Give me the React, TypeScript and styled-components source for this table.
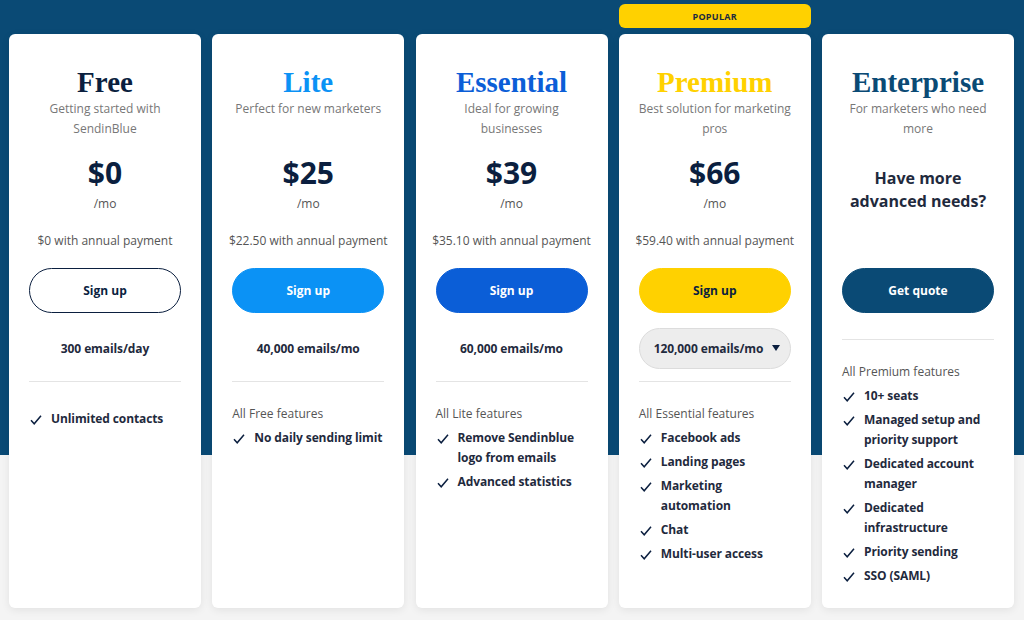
import React from "react";
import styled, { createGlobalStyle } from "styled-components";

const NAVY = "#0a4a75";
const INK = "#0b1f3f";
const TEXT = "#1f2a3d";

const GlobalStyle = createGlobalStyle`
  body {
    margin: 0;
    font-family: "Open Sans", "Liberation Sans", sans-serif;
    color: ${INK};
  }
`;

type Plan = {
  name: string;
  color: string;
  subtitle: string;
  price?: string;
  annual?: string;
  question?: string;
  button: string;
  buttonBg: string;
  buttonText: string;
  outline?: boolean;
  volume?: string;
  select?: boolean;
  label?: string;
  features: string[];
};

const plans: Plan[] = [
  {
    name: "Free",
    color: INK,
    subtitle: "Getting started with SendinBlue",
    price: "$0",
    annual: "$0 with annual payment",
    button: "Sign up",
    buttonBg: "#fff",
    buttonText: INK,
    outline: true,
    volume: "300 emails/day",
    features: ["Unlimited contacts"],
  },
  {
    name: "Lite",
    color: "#0b92f5",
    subtitle: "Perfect for new marketers",
    price: "$25",
    annual: "$22.50 with annual payment",
    button: "Sign up",
    buttonBg: "#0b92f5",
    buttonText: "#fff",
    volume: "40,000 emails/mo",
    label: "All Free features",
    features: ["No daily sending limit"],
  },
  {
    name: "Essential",
    color: "#0b5ed7",
    subtitle: "Ideal for growing businesses",
    price: "$39",
    annual: "$35.10 with annual payment",
    button: "Sign up",
    buttonBg: "#0b5ed7",
    buttonText: "#fff",
    volume: "60,000 emails/mo",
    label: "All Lite features",
    features: ["Remove Sendinblue logo from emails", "Advanced statistics"],
  },
  {
    name: "Premium",
    color: "#ffd100",
    subtitle: "Best solution for marketing pros",
    price: "$66",
    annual: "$59.40 with annual payment",
    button: "Sign up",
    buttonBg: "#ffd100",
    buttonText: INK,
    volume: "120,000 emails/mo",
    select: true,
    label: "All Essential features",
    features: [
      "Facebook ads",
      "Landing pages",
      "Marketing automation",
      "Chat",
      "Multi-user access",
    ],
  },
  {
    name: "Enterprise",
    color: NAVY,
    subtitle: "For marketers who need more",
    question: "Have more advanced needs?",
    button: "Get quote",
    buttonBg: NAVY,
    buttonText: "#fff",
    label: "All Premium features",
    features: [
      "10+ seats",
      "Managed setup and priority support",
      "Dedicated account manager",
      "Dedicated infrastructure",
      "Priority sending",
      "SSO (SAML)",
    ],
  },
];

const Check = () => (
  <CheckIcon viewBox="0 0 12 10" width="12" height="10">
    <polyline points="1,5.3 4.2,8.8 11,0.8" fill="none" stroke={INK} strokeWidth="1.5" />
  </CheckIcon>
);

const Caret = () => (
  <svg viewBox="0 0 8 6" width="8" height="6">
    <polygon points="0,0 8,0 4,6" fill={INK} />
  </svg>
);

const App = () => {
  return (
    <Page>
      <GlobalStyle />
      <Grid>
        <Badge>POPULAR</Badge>
        {plans.map((p) => (
          <Card key={p.name}>
            <Title $color={p.color}>{p.name}</Title>
            <Subtitle>{p.subtitle}</Subtitle>

            <PriceArea>
              {p.price ? (
                <>
                  <Price>{p.price}</Price>
                  <Per>/mo</Per>
                  <Annual>{p.annual}</Annual>
                </>
              ) : (
                <Question>{p.question}</Question>
              )}
            </PriceArea>

            <Button $bg={p.buttonBg} $text={p.buttonText} $outline={p.outline}>
              {p.button}
            </Button>

            <Volume $empty={!p.volume}>
              {p.select ? (
                <Select>
                  <span>{p.volume}</span>
                  <Caret />
                </Select>
              ) : (
                p.volume && <VolumeText>{p.volume}</VolumeText>
              )}
            </Volume>

            <Divider />

            <Features $hasLabel={!!p.label}>
              {p.label && <Label>{p.label}</Label>}
              {p.features.map((f) => (
                <Feature key={f}>
                  <Check />
                  {f}
                </Feature>
              ))}
            </Features>
          </Card>
        ))}
      </Grid>
    </Page>
  );
};

const Page = styled.div`
  width: 1024px;
  height: 620px;
  overflow: hidden;
  background: linear-gradient(to bottom, ${NAVY} 0, ${NAVY} 455px, #f4f4f4 455px);
  padding: 4px 0 0 9px;
  box-sizing: border-box;
`;

const Grid = styled.div`
  display: grid;
  grid-template-columns: repeat(5, 192px);
  grid-template-rows: 24px 574px;
  column-gap: 11.25px;
  row-gap: 6px;
`;

const Badge = styled.div`
  grid-column: 4;
  grid-row: 1;
  background: #ffd100;
  border-radius: 6px;
  display: flex;
  align-items: center;
  justify-content: center;
  font-size: 9px;
  font-weight: 700;
  letter-spacing: 0.3px;
  color: #1c2a3f;
`;

const Card = styled.div`
  grid-row: 2;
  background: #fff;
  border-radius: 6px;
  box-shadow: 0 2px 8px rgba(0, 0, 0, 0.08);
  padding: 31px 20px 0;
  display: flex;
  flex-direction: column;
  text-align: center;
`;

const Title = styled.h2<{ $color: string }>`
  margin: 0;
  font-family: "Liberation Serif", serif;
  font-size: 29px;
  line-height: 34px;
  font-weight: 700;
  color: ${(p) => p.$color};
`;

const Subtitle = styled.p`
  margin: 0 -2px;
  min-height: 40px;
  font-size: 12px;
  line-height: 20px;
  color: #777;
`;

const PriceArea = styled.div`
  height: 129px;
  display: flex;
  flex-direction: column;
  padding-top: 16px;
  box-sizing: border-box;
`;

const Price = styled.div`
  font-size: 30px;
  line-height: 36px;
  font-weight: 700;
  color: ${INK};
`;

const Per = styled.div`
  margin-top: 3px;
  font-size: 12px;
  line-height: 20px;
  color: #555;
`;

const Annual = styled.div`
  margin: 17px -6px 0;
  white-space: nowrap;
  font-size: 12px;
  line-height: 20px;
  color: #555;
`;

const Question = styled.div`
  margin-top: 12px;
  font-size: 16px;
  line-height: 23px;
  font-weight: 700;
  color: ${TEXT};
`;

const Button = styled.button<{ $bg: string; $text: string; $outline?: boolean }>`
  height: 45px;
  width: 100%;
  border-radius: 23px;
  border: 1px solid ${(p) => (p.$outline ? INK : p.$bg)};
  background: ${(p) => p.$bg};
  color: ${(p) => p.$text};
  font-family: "Open Sans", sans-serif;
  font-size: 12px;
  font-weight: 700;
  cursor: pointer;
`;

const Volume = styled.div<{ $empty: boolean }>`
  height: ${(p) => (p.$empty ? 26 : 68)}px;
  display: flex;
  align-items: center;
  justify-content: center;
  padding-top: 2px;
  box-sizing: border-box;
`;

const VolumeText = styled.div`
  font-size: 12px;
  font-weight: 700;
  letter-spacing: -0.1px;
  color: ${TEXT};
`;

const Select = styled.div`
  width: 100%;
  height: 41px;
  border-radius: 21px;
  background: #ededed;
  border: 1px solid #dcdcdc;
  box-sizing: border-box;
  display: flex;
  align-items: center;
  justify-content: space-between;
  padding: 0 10px 0 14px;
  white-space: nowrap;
  font-size: 12px;
  font-weight: 700;
  letter-spacing: -0.1px;
  color: ${TEXT};
`;

const Divider = styled.hr`
  margin: 0;
  border: none;
  border-top: 1px solid #e4e4e4;
`;

const Features = styled.ul<{ $hasLabel: boolean }>`
  list-style: none;
  margin: 0;
  padding: ${(p) => (p.$hasLabel ? 22 : 27)}px 0 0;
  text-align: left;
`;

const Label = styled.li`
  font-size: 12px;
  line-height: 20px;
  color: #555;
`;

const Feature = styled.li`
  position: relative;
  margin-top: 4px;
  padding-left: 22px;
  font-size: 12px;
  line-height: 20px;
  font-weight: 700;
  letter-spacing: -0.1px;
  color: ${TEXT};

  &:first-child {
    margin-top: 0;
  }
`;

const CheckIcon = styled.svg`
  position: absolute;
  left: 1px;
  top: 6px;
`;

export default App;
